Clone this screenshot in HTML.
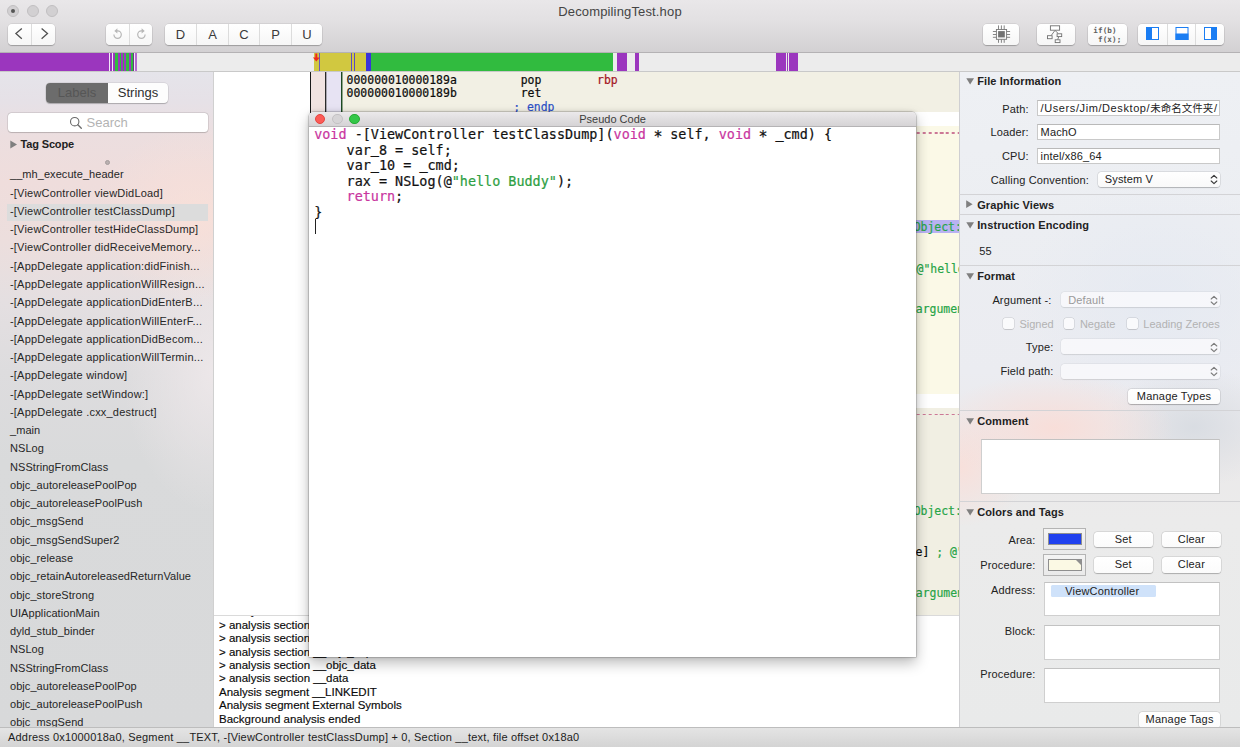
<!DOCTYPE html>
<html>
<head>
<meta charset="utf-8">
<title>DecompilingTest.hop</title>
<style>
*{box-sizing:border-box;margin:0;padding:0}
html,body{width:1240px;height:747px;overflow:hidden;background:#ececec}
body{font-family:"Liberation Sans","Noto Sans CJK SC",sans-serif;font-size:11px;color:#262626;position:relative}
.abs{position:absolute}
#titlebar{left:0;top:0;width:1240px;height:53px;background:linear-gradient(#e9e7e9 0,#e2e0e2 22px,#d3d1d3 52px);border-bottom:1px solid #b4b2b4}
#title{left:0;width:1240px;top:3.5px;text-align:center;font-size:13px;color:#444;letter-spacing:.15px}
.tl{width:12px;height:12px;border-radius:50%;background:#d2d0d2;border:1px solid #c1bfc1;top:4.6px}
.btn{background:linear-gradient(#fff,#f6f6f6);border-radius:4px;box-shadow:0 0 0 .5px rgba(0,0,0,.12),0 1px 1px rgba(0,0,0,.22);top:24px;height:21px}
.seg{position:absolute;top:0;height:21px;border-left:1px solid #dcdcdc;text-align:center;font-size:13px;line-height:21px;color:#3a3a3a}
.seg:first-child{border-left:none}
#colorbar{left:0;top:53px;width:1240px;height:18px;background:#ececec}
#colorbar i{position:absolute;top:0;height:18px;display:block}
#cbline{left:0;top:71px;width:1240px;height:1px;background:#c9c9c9}
#sidebar{left:0;top:72px;width:213px;height:655px;overflow:hidden;
 background:
 radial-gradient(ellipse 100px 90px at 195px 145px,rgba(250,224,216,.8),rgba(250,224,216,0) 100%),
 radial-gradient(ellipse 90px 140px at 213px 300px,rgba(238,232,234,.9),rgba(238,232,234,0) 100%),
 linear-gradient(180deg,#e5e4ea 0,#e6e1e7 30px,#ecdedf 65px,#efdddc 110px,#ecdedd 170px,#e4dfe1 230px,#dddcde 300px,#d9dadb 390px,#d8d9da 655px)}
#sideline{left:213px;top:72px;width:1px;height:655px;background:#d0d0d0}
.row{position:absolute;left:10px;white-space:nowrap;font-size:11px;line-height:14px;color:#262626;letter-spacing:.2px}
#main{left:214px;top:72px;width:745px;height:543px;background:#fff;overflow:hidden}
#log{left:214px;top:614.5px;width:745px;height:112.5px;background:#fff;border-top:1px solid #dadada;overflow:hidden}
#log div{position:absolute;left:5px;white-space:nowrap;font-size:11.5px;line-height:14px;color:#0a0a0a;margin-top:.6px;-webkit-text-stroke:.15px}
#insp{left:959px;top:72px;width:281px;height:655px;overflow:hidden;box-shadow:inset 1px 0 0 #cfcfd2;
 background:
 radial-gradient(ellipse 120px 55px at 95px 356px,rgba(248,222,217,1),rgba(248,222,217,0) 100%),
 radial-gradient(ellipse 70px 60px at 0px 395px,rgba(248,224,219,1),rgba(248,224,219,0) 100%),
 radial-gradient(ellipse 90px 60px at 235px 355px,rgba(216,220,226,.95),rgba(216,220,226,0) 100%),
 radial-gradient(ellipse 140px 120px at 200px 230px,rgba(228,233,242,.8),rgba(228,233,242,0) 100%),
 linear-gradient(180deg,#eef0f4 0,#eceef2 150px,#ebecf1 300px,#ebe9ea 380px,#ebebeb 450px,#e9eaea 655px)}
#status{left:0;top:727px;width:1240px;height:20px;background:linear-gradient(#e4e4e4,#d4d4d4);border-top:1px solid #bdbdbd}
#status span{position:absolute;left:8px;top:1.7px;font-size:11px;line-height:14px;color:#1c1c1c;white-space:nowrap;letter-spacing:.19px}
#main .t{position:absolute;white-space:pre;font-family:"DejaVu Sans Mono","Liberation Mono",monospace;font-size:11.45px;line-height:14px;color:#0a0a0a;-webkit-text-stroke:.2px}
#main .g{color:#27a548}
#pwin{left:309px;top:112px;width:607.2px;height:544.5px;background:#fff;border-radius:4.5px 4.5px 0 0;box-shadow:0 0 0 .5px rgba(0,0,0,.28),0 6px 14px rgba(0,0,0,.27),0 0 4px rgba(0,0,0,.15);overflow:hidden}
#ptitle{left:0;top:0;width:100%;height:14.5px;background:linear-gradient(#ebe9eb,#d5d3d5);border-bottom:.5px solid #b5b3b5;text-align:center;font-size:11px;line-height:14.5px;color:#3c3c3c}
.pl{top:1.8px;width:10.6px;height:10.6px;border-radius:50%;border:.5px solid}
#pcode{left:5.2px;top:15px;-webkit-text-stroke:.2px;white-space:pre;font-family:"DejaVu Sans Mono","Liberation Mono",monospace;font-size:13.44px;line-height:15.5px;color:#111}
#pcode u{text-decoration:none;position:relative;top:-1.2px;-webkit-text-stroke:.4px #111}
#pcode b{font-weight:normal;display:inline-block;transform:translateY(2.3px) scale(1.12)}
.k{color:#c936a0}.sg{color:#2ea043}
#insp .h{position:absolute;left:18.2px;font-weight:bold;font-size:11px;line-height:14px;color:#222;white-space:nowrap;letter-spacing:.1px}
#insp .lb{position:absolute;text-align:right;font-size:11px;line-height:14px;color:#222;white-space:nowrap;letter-spacing:.15px}
#insp .sep{position:absolute;left:0;width:281px;height:1px;background:#d3d3d6}
#insp .fld{position:absolute;background:#fff;border:1px solid #c9c9c9;border-top-color:#b9b9b9;font-size:11px;line-height:14.6px;padding-left:2.5px;white-space:nowrap;overflow:hidden;color:#222;letter-spacing:.15px}
#insp .pop{position:absolute;border-radius:3.5px;background:linear-gradient(#fff,#f9f9f9);box-shadow:0 0 0 .5px rgba(0,0,0,.13),0 .8px 1px rgba(0,0,0,.2);font-size:11px;line-height:15px;padding-left:7px;color:#222;white-space:nowrap;letter-spacing:.15px}
#insp .pop.dis{background:rgba(250,250,252,.8);color:#9a9a9a;box-shadow:0 0 0 .5px rgba(0,0,0,.06),0 .8px 1px rgba(0,0,0,.09)}
#insp .pop svg{position:absolute;right:2.2px;top:2.5px}
#insp .cb{position:absolute;width:10.6px;height:10.6px;border-radius:2.5px;background:rgba(255,255,255,.75);box-shadow:0 0 0 .5px rgba(0,0,0,.14),0 .5px .8px rgba(0,0,0,.1)}
#insp .cl{position:absolute;font-size:11px;line-height:14px;color:#b2b2b2;white-space:nowrap;letter-spacing:0}
#insp .pb{position:absolute;border-radius:3.5px;background:linear-gradient(#fff,#fbfbfb);box-shadow:0 0 0 .5px rgba(0,0,0,.13),0 .8px 1px rgba(0,0,0,.22);font-size:11px;line-height:15px;text-align:center;color:#222;white-space:nowrap;letter-spacing:.2px}
#insp .box{position:absolute;background:#fff;border:1px solid #cfcfcf;border-top-color:#c2c2c2}
#insp .well{position:absolute;background:linear-gradient(#f4f4f4,#e9e9e9);border:1px solid #b4b4b4}
#insp .well i{position:absolute;left:3.5px;top:4px;right:3.5px;bottom:4px;border:1px solid #8f8f8f;display:block}
.mono{font-family:"DejaVu Sans Mono","Liberation Mono",monospace}
</style>
</head>
<body>
<!-- title bar / toolbar -->
<div id="titlebar" class="abs"></div>
<div id="title" class="abs">DecompilingTest.hop</div>
<div class="abs tl" style="left:7px"><span style="position:absolute;left:3px;top:3px;width:4px;height:4px;border-radius:50%;background:#555"></span></div>
<div class="abs tl" style="left:27px"></div>
<div class="abs tl" style="left:46px"></div>

<!-- toolbar buttons -->
<div class="abs btn" style="left:7.8px;width:46.8px">
  <div class="seg" style="left:0;width:23.5px"><svg style="position:absolute;left:0;top:0" width="23" height="21" viewBox="0 0 23 21"><path d="M13.8 4.4 L7.9 9.6 L13.8 14.8" fill="none" stroke="#505050" stroke-width="1.3" stroke-linecap="butt" stroke-linejoin="miter"/></svg></div>
  <div class="seg" style="left:23.2px;width:23.6px"><svg style="position:absolute;left:0;top:0" width="23" height="21" viewBox="0 0 23 21"><path d="M9.6 4.4 L15.5 9.6 L9.6 14.8" fill="none" stroke="#505050" stroke-width="1.3" stroke-linecap="butt" stroke-linejoin="miter"/></svg></div>
</div>
<div class="abs btn" style="left:105.8px;width:46.4px">
  <div class="seg" style="left:0;width:23.3px"><svg style="position:absolute;left:0;top:0" width="23" height="21" viewBox="0 0 23 21"><path d="M7.9 10.6 A3.7 3.7 0 1 0 11.6 6.9 L10.4 6.9" fill="none" stroke="#b7b7b7" stroke-width="1.2"/><path d="M11.4 4.3 L8.3 6.9 L11.4 9.5 Z" fill="#b7b7b7"/></svg></div>
  <div class="seg" style="left:23.3px;width:23.1px"><svg style="position:absolute;left:0;top:0" width="23" height="21" viewBox="0 0 23 21"><path d="M15.1 10.6 A3.7 3.7 0 1 1 11.4 6.9 L12.6 6.9" fill="none" stroke="#b7b7b7" stroke-width="1.2"/><path d="M11.6 4.3 L14.7 6.9 L11.6 9.5 Z" fill="#b7b7b7"/></svg></div>
</div>
<div class="abs btn" style="left:165px;width:157px">
  <div class="seg" style="left:0;width:31px">D</div>
  <div class="seg" style="left:31px;width:32px">A</div>
  <div class="seg" style="left:63px;width:31px">C</div>
  <div class="seg" style="left:94px;width:32px">P</div>
  <div class="seg" style="left:126px;width:31px">U</div>
</div>
<div class="abs btn" style="left:983px;width:36.2px">
  <svg style="position:absolute;left:0;top:0" width="37" height="21" viewBox="0 0 37 21"><g stroke="#777" stroke-width=".9" fill="none">
  <rect x="13.4" y="5.5" width="10.2" height="9.8"/>
  <path d="M15.5 1.4v4M18.4 1.4v4M21.2 1.4v4M15.5 15.4v3.4M18.4 15.4v3.4M21.2 15.4v3.4M9.9 7.5h3.4M9.9 10.5h3.4M9.9 13.3h3.4M23.7 7.5h3.4M23.7 10.5h3.4M23.7 13.3h3.4"/></g>
  <rect x="15.1" y="7.1" width="6.7" height="6.3" fill="#727272"/></svg>
</div>
<div class="abs btn" style="left:1036.8px;width:37.8px">
  <svg style="position:absolute;left:0;top:0" width="38" height="21" viewBox="0 0 38 21"><g stroke="#707070" stroke-width=".9" fill="#fff">
  <path d="M18 6.4L14.2 11.5M18 6.4L21.3 9.6M21.7 12.8L20.7 15.7" fill="none"/>
  <rect x="13.4" y="1.8" width="9.2" height="4.4"/>
  <rect x="10.5" y="11.7" width="4.6" height="3"/>
  <rect x="20.1" y="9.8" width="4.6" height="2.8"/>
  <rect x="18.2" y="15.8" width="4.8" height="2.8"/></g></svg>
</div>
<div class="abs btn mono" style="left:1087.6px;width:39.2px;font-size:7.6px;font-weight:bold;line-height:9px;color:#606060;white-space:pre;padding:1.5px 0 0 5.6px;letter-spacing:.15px">if(b)
 f(x);</div>
<div class="abs btn" style="left:1138px;width:86px">
  <div class="seg" style="left:0;width:29px"><svg width="29" height="21" viewBox="0 0 29 21"><rect x="8.5" y="3.5" width="12" height="12" fill="#fff" stroke="#1a7df3" stroke-width="1"/><rect x="8" y="3" width="6" height="13" fill="#1a7df3"/></svg></div>
  <div class="seg" style="left:29px;width:28px"><svg width="28" height="21" viewBox="0 0 28 21"><rect x="8" y="3.5" width="12" height="12" fill="#fff" stroke="#1a7df3" stroke-width="1"/><rect x="7.5" y="9.5" width="13" height="6.5" fill="#1a7df3"/></svg></div>
  <div class="seg" style="left:57px;width:29px"><svg width="29" height="21" viewBox="0 0 29 21"><rect x="8.5" y="3.5" width="12" height="12" fill="#fff" stroke="#1a7df3" stroke-width="1"/><rect x="15" y="3" width="6" height="13" fill="#1a7df3"/></svg></div>
</div>

<div id="colorbar" class="abs"><i style="left:0px;width:109px;background:#9b36be"></i><i style="left:109px;width:1px;background:#f3e6f8"></i><i style="left:110px;width:1.5px;background:#9b36be"></i><i style="left:111.5px;width:1.0px;background:#f3e6f8"></i><i style="left:112.5px;width:2.5px;background:#9b36be"></i><i style="left:115px;width:3px;background:#31bb3f"></i><i style="left:118px;width:2px;background:#9b36be"></i><i style="left:120px;width:1px;background:#31bb3f"></i><i style="left:121px;width:1.5px;background:#9b36be"></i><i style="left:122.5px;width:1.0px;background:#31bb3f"></i><i style="left:123.5px;width:2.0px;background:#9b36be"></i><i style="left:125.5px;width:3.0px;background:#31bb3f"></i><i style="left:128.5px;width:2.0px;background:#9b36be"></i><i style="left:130.5px;width:2.0px;background:#31bb3f"></i><i style="left:132.5px;width:1.0px;background:#6a3a8a"></i><i style="left:133.5px;width:1.5px;background:#f3e6f8"></i><i style="left:135px;width:1.5px;background:#b66ad0"></i><i style="left:314px;width:52px;background:#d1c840"></i><i style="left:318.5px;width:1.0px;background:#6a5ab8"></i><i style="left:351.3px;width:0.9px;background:#5a4ac8"></i><i style="left:354px;width:0.9px;background:#5a4ac8"></i><i style="left:366px;width:5.3px;background:#3a34d8"></i><i style="left:371.3px;width:241.9px;background:#31bb3f"></i><i style="left:617.1px;width:9.5px;background:#9b36be"></i><i style="left:635.1px;width:4.1px;background:#9b36be"></i><i style="left:776.4px;width:9.6px;background:#9b36be"></i><i style="left:786.8px;width:1.0px;background:#9b36be"></i><i style="left:788.8px;width:9.6px;background:#9b36be"></i><svg style="position:absolute;left:311px;top:0" width="11" height="10" viewBox="0 0 11 10"><path d="M4.3 0.5h2v4h2.4L5.3 8.6 1.9 4.5h2.4z" fill="#f0281e"/></svg></div>
<div id="cbline" class="abs"></div>
<div id="sidebar" class="abs">
  <div class="abs" style="left:46px;top:11px;width:122px;height:20px;border-radius:4px;background:#fdfdfd;box-shadow:0 0 0 .5px rgba(0,0,0,.12),0 1px 1px rgba(0,0,0,.2)">
    <div class="abs" style="left:0;top:0;width:62px;height:20px;border-radius:4px 0 0 4px;background:#6c6c6c;color:#565656;font-size:13px;line-height:20px;text-align:center">Labels</div>
    <div class="abs" style="left:62px;top:0;width:60px;height:20px;color:#2e2e2e;font-size:13px;line-height:20px;text-align:center">Strings</div>
  </div>
  <div class="abs" style="left:7.5px;top:40.5px;width:200px;height:19px;border-radius:3.5px;background:#fff;box-shadow:0 0 0 .5px rgba(0,0,0,.16),0 .5px 1px rgba(0,0,0,.14)">
    <svg class="abs" style="left:61px;top:3px" width="14" height="14" viewBox="0 0 14 14"><circle cx="5.7" cy="5.7" r="4.2" fill="none" stroke="#6a6a6a" stroke-width="1.1"/><path d="M8.8 8.8 L12.3 12.3" stroke="#6a6a6a" stroke-width="1.3" stroke-linecap="round"/></svg>
    <div class="abs" style="left:79px;top:0;font-size:13px;line-height:19px;color:#b3b3b3">Search</div>
  </div>
  <svg class="abs" style="left:10px;top:67.5px" width="8" height="9" viewBox="0 0 8 9"><path d="M0.3 0.5 L7 4.5 L0.3 8.5 Z" fill="#7f7f7f"/></svg>
  <div class="abs" style="left:20.5px;top:65px;font-size:11px;font-weight:bold;line-height:14px;color:#222;white-space:nowrap;letter-spacing:-.15px">Tag Scope</div>
  <div class="abs" style="left:104.5px;top:88px;width:5px;height:5px;border-radius:50%;background:#b9b0b0;border:.5px solid #a59d9d"></div>
  <div class="abs" style="left:7px;top:131.5px;width:201px;height:17.2px;background:#dcdcdc"></div>
  <div class="row" style="top:95.3px;letter-spacing:.06px">__mh_execute_header</div>
  <div class="row" style="top:113.6px">-[ViewController viewDidLoad]</div>
  <div class="row" style="top:131.8px">-[ViewController testClassDump]</div>
  <div class="row" style="top:150.1px">-[ViewController testHideClassDump]</div>
  <div class="row" style="top:168.4px">-[ViewController didReceiveMemory...</div>
  <div class="row" style="top:186.6px">-[AppDelegate application:didFinish...</div>
  <div class="row" style="top:204.9px">-[AppDelegate applicationWillResign...</div>
  <div class="row" style="top:223.2px">-[AppDelegate applicationDidEnterB...</div>
  <div class="row" style="top:241.5px">-[AppDelegate applicationWillEnterF...</div>
  <div class="row" style="top:259.7px">-[AppDelegate applicationDidBecom...</div>
  <div class="row" style="top:278.0px">-[AppDelegate applicationWillTermin...</div>
  <div class="row" style="top:296.3px">-[AppDelegate window]</div>
  <div class="row" style="top:314.5px">-[AppDelegate setWindow:]</div>
  <div class="row" style="top:332.8px">-[AppDelegate .cxx_destruct]</div>
  <div class="row" style="top:351.1px;letter-spacing:.06px">_main</div>
  <div class="row" style="top:369.3px;letter-spacing:.06px">NSLog</div>
  <div class="row" style="top:387.6px;letter-spacing:.06px">NSStringFromClass</div>
  <div class="row" style="top:405.9px;letter-spacing:.06px">objc_autoreleasePoolPop</div>
  <div class="row" style="top:424.2px;letter-spacing:.06px">objc_autoreleasePoolPush</div>
  <div class="row" style="top:442.4px;letter-spacing:.06px">objc_msgSend</div>
  <div class="row" style="top:460.7px;letter-spacing:.06px">objc_msgSendSuper2</div>
  <div class="row" style="top:479.0px;letter-spacing:.06px">objc_release</div>
  <div class="row" style="top:497.2px;letter-spacing:.06px">objc_retainAutoreleasedReturnValue</div>
  <div class="row" style="top:515.5px;letter-spacing:.06px">objc_storeStrong</div>
  <div class="row" style="top:533.8px;letter-spacing:.06px">UIApplicationMain</div>
  <div class="row" style="top:552.1px;letter-spacing:.06px">dyld_stub_binder</div>
  <div class="row" style="top:570.3px;letter-spacing:.06px">NSLog</div>
  <div class="row" style="top:588.6px;letter-spacing:.06px">NSStringFromClass</div>
  <div class="row" style="top:606.9px;letter-spacing:.06px">objc_autoreleasePoolPop</div>
  <div class="row" style="top:625.1px;letter-spacing:.06px">objc_autoreleasePoolPush</div>
  <div class="row" style="top:643.4px;letter-spacing:.06px">objc_msgSend</div>
</div>
<div id="sideline" class="abs"></div>
<div id="main" class="abs">
  <div class="abs" style="left:96px;top:0;width:649px;height:40.4px;background:#f2f0e4"></div>
  <div class="abs" style="left:96px;top:0;width:1px;height:45px;background:#1a1a1a"></div>
  <div class="abs" style="left:97px;top:0;width:14px;height:45px;background:#f1e3e1"></div>
  <div class="abs" style="left:111px;top:0;width:1px;height:45px;background:#2a2a2a"></div><div class="abs" style="left:112px;top:0;width:1px;height:45px;background:#a9a6b0"></div>
  <div class="abs" style="left:113px;top:0;width:14px;height:45px;background:#e7e3f3"></div>
  <div class="abs" style="left:127px;top:0;width:1px;height:45px;background:#1c4a22"></div><div class="abs" style="left:128px;top:0;width:1px;height:45px;background:#8fa58a"></div>
  <div class="abs" style="left:128.6px;top:40.4px;width:620px;height:13.3px;background:#fff"></div>
  <div class="abs" style="left:128.6px;top:53.7px;width:620px;height:268.8px;background:#fbf9e7"></div>
  <div class="abs" style="left:128.6px;top:322.5px;width:620px;height:13.3px;background:#fff"></div>
  <div class="abs" style="left:128.6px;top:335.8px;width:620px;height:207.2px;background:#f1efe3"></div>
  <div class="abs" style="left:128.6px;top:60.1px;width:620px;height:1.6px;background:repeating-linear-gradient(90deg,#cc7896 0,#cc7896 3.1px,transparent 3.1px,transparent 5.8px);background-position:-0.3px 0"></div>
  <div class="abs" style="left:128.6px;top:341.9px;width:620px;height:1.6px;background:repeating-linear-gradient(90deg,#cc7896 0,#cc7896 3.1px,transparent 3.1px,transparent 5.8px);background-position:-0.3px 0"></div>
  <div class="abs" style="left:128.6px;top:148.2px;width:620px;height:13.2px;background:#b9b2f2"></div>
<div class="t " style="left:132.6px;top:0.8px;">000000010000189a</div>
<div class="t " style="left:306.7px;top:0.8px;">pop</div>
<div class="t " style="left:383.0px;top:0.8px;color:#a3141f">rbp</div>
<div class="t " style="left:132.6px;top:14.4px;">000000010000189b</div>
<div class="t " style="left:306.7px;top:14.4px;">ret</div>
<div class="t " style="left:299.2px;top:27.8px;color:#2b4fc6">; endp</div>
<div class="t g" style="left:699.7px;top:147.9px;">Object:</div>
<div class="t g" style="left:702.5px;top:189.9px;">@"hello Buddy"</div>
<div class="t g" style="left:701.8px;top:230.4px;">argument</div>
<div class="t g" style="left:699.7px;top:431.5px;">Object:</div>
<div class="t " style="left:701.6px;top:472.7px;">e] <span class="g">; @"hello"</span></div>
<div class="t g" style="left:701.8px;top:514.0px;">argument</div>
</div>
<div id="log" class="abs"><div style="top:-11.7px">> analysis section __objc_const</div>
<div style="top:1.7px">> analysis section __objc_selrefs</div>
<div style="top:15.1px">> analysis section __objc_classrefs</div>
<div style="top:28.6px">> analysis section __objc_superrefs</div>
<div style="top:42.0px">> analysis section __objc_data</div>
<div style="top:55.4px">> analysis section __data</div>
<div style="top:68.8px">Analysis segment __LINKEDIT</div>
<div style="top:82.3px">Analysis segment External Symbols</div>
<div style="top:95.7px">Background analysis ended</div>
</div>
<div id="insp" class="abs">
<svg class="abs" style="left:6.9px;top:5.9px" width="9" height="7" viewBox="0 0 9 7"><path d="M0.3 0.2 H8 L4.15 6.6 Z" fill="#7f7f7f"/></svg><div class="h" style="top:1.9px">File Information</div>
<div class="lb" style="left:0;width:69.8px;top:29.7px">Path:</div>
<div class="fld" style="left:78.1px;top:27.6px;width:183.1px;height:16.6px"><span style="letter-spacing:.59px">/Users/Jim/Desktop/</span><span style="letter-spacing:0;font-size:10.5px">未命名文件夹</span><span style="letter-spacing:0;padding-left:.8px">/</span></div>
<div class="lb" style="left:0;width:69.8px;top:53.3px">Loader:</div>
<div class="fld" style="left:78.1px;top:51.7px;width:183.1px;height:16.6px">MachO</div>
<div class="lb" style="left:0;width:69.8px;top:77.4px">CPU:</div>
<div class="fld" style="left:78.1px;top:75.5px;width:183.1px;height:16.6px">intel/x86_64</div>
<div class="lb" style="left:0;width:130px;top:100.6px">Calling Convention:</div>
<div class="pop" style="left:138.8px;top:99.9px;width:122.4px;height:15.2px">System V<svg width="8" height="11" viewBox="0 0 8 11"><path d="M1.2 4 L4 1.3 L6.8 4 M1.2 7 L4 9.7 L6.8 7" fill="none" stroke="#3a3a3a" stroke-width="1.1" stroke-linecap="round" stroke-linejoin="round"/></svg></div>
<div class="sep" style="top:122.4px"></div>
<svg class="abs" style="left:7.3px;top:128.3px" width="7" height="9" viewBox="0 0 7 9"><path d="M0.2 0.3 V8.1 L6.6 4.2 Z" fill="#7f7f7f"/></svg><div class="h" style="top:125.5px">Graphic Views</div>
<div class="sep" style="top:142.4px"></div>
<svg class="abs" style="left:6.9px;top:149.6px" width="9" height="7" viewBox="0 0 9 7"><path d="M0.3 0.2 H8 L4.15 6.6 Z" fill="#7f7f7f"/></svg><div class="h" style="top:145.6px">Instruction Encoding</div>
<div class="lb" style="left:20.3px;top:171.6px;text-align:left">55</div>
<div class="sep" style="top:193.4px"></div>
<svg class="abs" style="left:6.9px;top:200.5px" width="9" height="7" viewBox="0 0 9 7"><path d="M0.3 0.2 H8 L4.15 6.6 Z" fill="#7f7f7f"/></svg><div class="h" style="top:196.5px">Format</div>
<div class="lb" style="left:0;width:92.5px;top:220.6px">Argument -:</div>
<div class="pop dis" style="left:102.2px;top:220.1px;width:158.6px;height:15.3px;line-height:16.2px">Default<svg width="8" height="11" viewBox="0 0 8 11"><path d="M1.2 4 L4 1.3 L6.8 4 M1.2 7 L4 9.7 L6.8 7" fill="none" stroke="#7c7c7c" stroke-width="1.1" stroke-linecap="round" stroke-linejoin="round"/></svg></div>
<div class="cb" style="left:44.4px;top:246.4px"></div>
<div class="cl" style="left:60.4px;top:244.7px">Signed</div>
<div class="cb" style="left:104.9px;top:246.4px"></div>
<div class="cl" style="left:120.9px;top:244.7px">Negate</div>
<div class="cb" style="left:168px;top:246.4px"></div>
<div class="cl" style="left:184.3px;top:244.7px">Leading Zeroes</div>
<div class="lb" style="left:0;width:94.4px;top:267.5px">Type:</div>
<div class="pop dis" style="left:102.2px;top:267px;width:158.6px;height:15.2px"><svg width="8" height="11" viewBox="0 0 8 11"><path d="M1.2 4 L4 1.3 L6.8 4 M1.2 7 L4 9.7 L6.8 7" fill="none" stroke="#7c7c7c" stroke-width="1.1" stroke-linecap="round" stroke-linejoin="round"/></svg></div>
<div class="lb" style="left:0;width:94.4px;top:292.3px">Field path:</div>
<div class="pop dis" style="left:102.2px;top:291.9px;width:158.6px;height:15.2px"><svg width="8" height="11" viewBox="0 0 8 11"><path d="M1.2 4 L4 1.3 L6.8 4 M1.2 7 L4 9.7 L6.8 7" fill="none" stroke="#7c7c7c" stroke-width="1.1" stroke-linecap="round" stroke-linejoin="round"/></svg></div>
<div class="pb" style="left:168.8px;top:316.5px;width:92.4px;height:15.5px">Manage Types</div>
<div class="sep" style="top:338.4px"></div>
<svg class="abs" style="left:6.9px;top:345.6px" width="9" height="7" viewBox="0 0 9 7"><path d="M0.3 0.2 H8 L4.15 6.6 Z" fill="#7f7f7f"/></svg><div class="h" style="top:341.6px">Comment</div>
<div class="box" style="left:22.4px;top:366.5px;width:238.8px;height:55.7px"></div>
<div class="sep" style="top:429.2px"></div>
<svg class="abs" style="left:6.9px;top:436.6px" width="9" height="7" viewBox="0 0 9 7"><path d="M0.3 0.2 H8 L4.15 6.6 Z" fill="#7f7f7f"/></svg><div class="h" style="top:432.6px">Colors and Tags</div>
<div class="lb" style="left:0;width:76.5px;top:460.5px">Area:</div>
<div class="well" style="left:84px;top:456px;width:43px;height:22px"><i style="background:#1f40ee"></i></div>
<div class="pb" style="left:134.8px;top:459.7px;width:58.9px;height:15.3px">Set</div>
<div class="pb" style="left:202.8px;top:459.7px;width:59.2px;height:15.3px">Clear</div>
<div class="lb" style="left:0;width:76.5px;top:486.4px">Procedure:</div>
<div class="well" style="left:84px;top:482px;width:43px;height:22px"><i style="background:#fbf9e4"><svg style="position:absolute;right:0;top:0" width="5" height="5" viewBox="0 0 5 5"><path d="M0 0H5V5Z" fill="#8f8f8f"/></svg></i></div>
<div class="pb" style="left:134.8px;top:485.4px;width:58.9px;height:15.5px">Set</div>
<div class="pb" style="left:202.8px;top:485.4px;width:59.2px;height:15.5px">Clear</div>
<div class="lb" style="left:0;width:76.5px;top:510.5px">Address:</div>
<div class="box" style="left:84.5px;top:509.5px;width:176.7px;height:34.8px"><div class="abs" style="left:6.3px;top:2.5px;width:104.9px;height:12px;background:#cfe2fa;border-radius:1.5px;font-size:11px;line-height:12.4px;text-align:center;color:#222;letter-spacing:.2px;padding-right:2px">ViewController</div></div>
<div class="lb" style="left:0;width:76.5px;top:551.8px">Block:</div>
<div class="box" style="left:84.5px;top:552.6px;width:176.7px;height:35.0px"></div>
<div class="lb" style="left:0;width:76.5px;top:595.1px">Procedure:</div>
<div class="box" style="left:84.5px;top:595.6px;width:176.7px;height:35.5px"></div>
<div class="pb" style="left:179.9px;top:640.4px;width:81.4px;height:15.6px">Manage Tags</div>
</div>

<div id="pwin" class="abs">
  <div id="ptitle" class="abs"><span>Pseudo Code</span></div>
  <div class="abs pl" style="left:5.8px;background:#fc5b57;border-color:#e2453f"></div>
  <div class="abs pl" style="left:23.1px;background:#d6d4d6;border-color:#c3c1c3"></div>
  <div class="abs pl" style="left:40.2px;background:#33c748;border-color:#27aa35"></div>
  <div id="pcode" class="abs"><span class="k">void</span> -[ViewController testClassDump](<span class="k">void</span> <b>*</b> self, <span class="k">void</span> <b>*</b> <u>_</u>cmd) {
    var<u>_</u>8 = self;
    var<u>_</u>10 = <u>_</u>cmd;
    rax = NSLog(@<span class="sg">"hello Buddy"</span>);
    <span class="k">return</span>;
}
</div>
  <div class="abs" style="left:5.6px;top:107px;width:1px;height:15px;background:#222"></div>
</div>
<div id="status" class="abs"><span>Address 0x1000018a0, Segment __TEXT, -[ViewController testClassDump] + 0, Section __text, file offset 0x18a0</span></div>
</body>
</html>
